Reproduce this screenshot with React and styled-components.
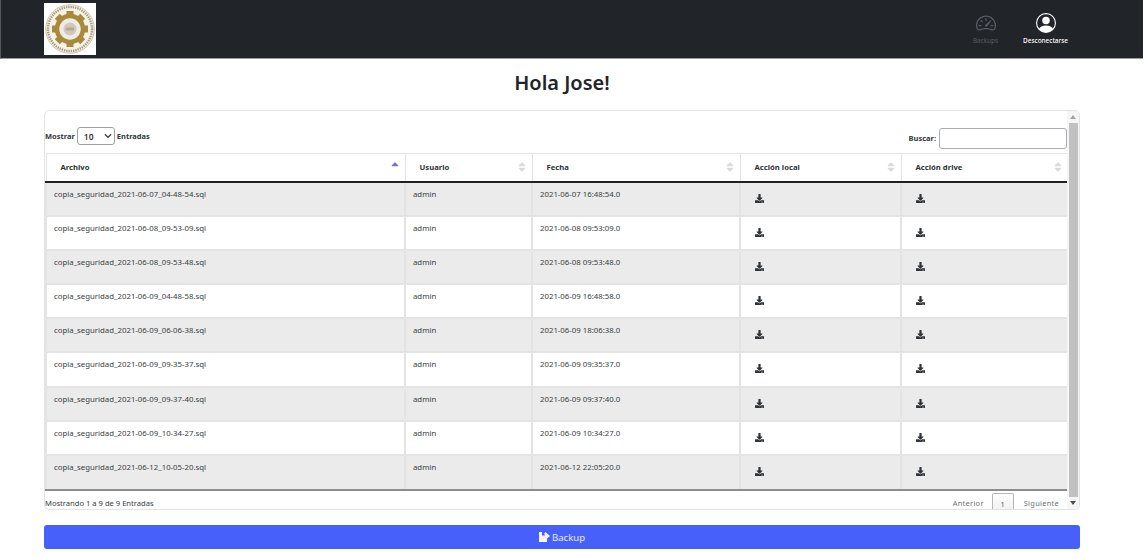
import React from "react";
import styled, { createGlobalStyle } from "styled-components";
import { FaDownload, FaSort, FaSortUp, FaChevronDown } from "react-icons/fa";
import { BsSpeedometer2, BsPersonCircle } from "react-icons/bs";

const GlobalStyle = createGlobalStyle`
  html, body { margin: 0; padding: 0; background: #fff; }
  body { font-family: "Noto Sans", "Open Sans", sans-serif; color: #212529; }
  * { box-sizing: border-box; }
`;

const rows = [
  ["copia_seguridad_2021-06-07_04-48-54.sql", "2021-06-07 16:48:54.0"],
  ["copia_seguridad_2021-06-08_09-53-09.sql", "2021-06-08 09:53:09.0"],
  ["copia_seguridad_2021-06-08_09-53-48.sql", "2021-06-08 09:53:48.0"],
  ["copia_seguridad_2021-06-09_04-48-58.sql", "2021-06-09 16:48:58.0"],
  ["copia_seguridad_2021-06-09_06-06-38.sql", "2021-06-09 18:06:38.0"],
  ["copia_seguridad_2021-06-09_09-35-37.sql", "2021-06-09 09:35:37.0"],
  ["copia_seguridad_2021-06-09_09-37-40.sql", "2021-06-09 09:37:40.0"],
  ["copia_seguridad_2021-06-09_10-34-27.sql", "2021-06-09 10:34:27.0"],
  ["copia_seguridad_2021-06-12_10-05-20.sql", "2021-06-12 22:05:20.0"],
];

const columns = [
  { title: "Archivo", width: 359, active: true },
  { title: "Usuario", width: 127 },
  { title: "Fecha", width: 208 },
  { title: "Acción local", width: 161 },
  { title: "Acción drive", width: 167 },
];

const Page = styled.div`
  width: 1146px;
  height: 559px;
  overflow: hidden;
`;

const Navbar = styled.nav`
  width: 1143px;
  height: 59px;
  background: #212529;
  border-left: 1px solid #55595e;
  border-bottom: 1px solid #9a9c9f;
  padding: 3px 75px 0 43px;
  display: flex;
  justify-content: space-between;
`;

const Logo = styled.div`
  width: 52px;
  height: 52px;
  background: #fff;
  display: flex;
  align-items: center;
  justify-content: center;
  svg {
    filter: blur(0.4px);
  }
`;

const NavLinks = styled.div`
  display: flex;
  gap: 25px;
  padding-top: 10px;
`;

const NavLink = styled.a`
  display: flex;
  flex-direction: column;
  align-items: center;
  gap: 3px;
  font-size: 6.4px;
  line-height: 10px;
  color: ${(p) => (p.$muted ? "#565d67" : "#fff")};
  font-weight: ${(p) => (p.$muted ? 400 : 500)};
`;

const Title = styled.h1`
  margin: 10px 0 14px;
  height: 27px;
  font-size: 20px;
  line-height: 27px;
  font-weight: 600;
  text-align: center;
  width: 1124px;
`;

const Card = styled.section`
  margin-left: 44px;
  width: 1036px;
  height: 400px;
  border: 1px solid #e2e3e5;
  border-radius: 5px;
  display: flex;
  overflow: hidden;
`;

const Content = styled.div`
  width: 1022px;
  flex: none;
`;

const Controls = styled.div`
  height: 42px;
  padding-top: 17px;
  display: flex;
  justify-content: space-between;
  font-size: 7.5px;
  font-weight: 700;
  color: #33373b;
`;

const Label = styled.label`
  display: flex;
  align-items: center;
  gap: 2px;
  height: 20px;
`;

const EntriesLabel = styled(Label)`
  margin-top: -2px;
`;

const SelectBox = styled.span`
  width: 38px;
  height: 18px;
  border: 1px solid #9ea2a6;
  border-radius: 3px;
  display: flex;
  align-items: center;
  justify-content: space-between;
  padding: 0 2px 0 6px;
  font-size: 8.5px;
  font-weight: 600;
  color: #33373b;
`;

const SearchBox = styled.span`
  width: 128px;
  height: 21px;
  border: 1px solid #a9adb1;
  border-radius: 3px;
  margin-left: 1px;
`;

const Table = styled.table`
  width: 1022px;
  table-layout: fixed;
  border-collapse: collapse;
`;

const HeadCell = styled.th`
  height: 28px;
  position: relative;
  padding: 0 0 1px 14px;
  text-align: left;
  font-size: 7.7px;
  font-weight: 700;
  color: #2f3337;
  border-top: 1px solid #e4e4e8;
  border-left: 1px solid #e4e4e8;
  border-right: 1px solid #e4e4e8;
  border-bottom: 2px solid #1f2225;
`;

const SortMark = styled.span`
  position: absolute;
  right: 4px;
  top: 7px;
  font-size: 12px;
  line-height: 13px;
  color: ${(p) => (p.$active ? "#7b74d0" : "#d8dadc")};
`;

const Row = styled.tr`
  background: ${(p) => (p.$striped ? "#ebebeb" : "#fff")};
`;

const Cell = styled.td`
  height: 34.2px;
  padding: 6px 8px 0 7px;
  vertical-align: top;
  font-size: 7.8px;
  line-height: 11px;
  color: #3a3e42;
  border: 2px solid #e4e4e4;
  border-top: 0;
  tr:last-child & {
    height: 35px;
    border-bottom: 2px solid #8d8d8d;
  }
`;

const IconCell = styled(Cell)`
  padding: 11px 0 0 14px;
  color: #2f3337;
  font-size: 9px;
`;

const Footer = styled.div`
  height: 20px;
  display: flex;
  justify-content: space-between;
  font-size: 7.6px;
  color: #3a3e42;
  padding-top: 7px;
`;

const Pager = styled.div`
  display: flex;
  margin-top: -5px;
  font-size: 7.4px;
  color: #6d7175;
`;

const PagerLink = styled.span`
  padding: 5px 8px 0 10px;
  letter-spacing: 0.3px;
`;

const PagerCurrent = styled.span`
  width: 22px;
  height: 20px;
  border: 1px solid #b4b6b8;
  border-bottom: 0;
  border-radius: 2px 2px 0 0;
  background: linear-gradient(#fff, #eee);
  text-align: center;
  padding-top: 5px;
  color: #555;
`;

const Scrollbar = styled.div`
  width: 12px;
  background: #f6f6f6;
  display: flex;
  flex-direction: column;
  align-items: center;
`;

const Arrow = styled.span`
  width: 0;
  height: 0;
  margin: 4px 0;
  border-left: 3px solid transparent;
  border-right: 3px solid transparent;
  border-${(p) => (p.$up ? "bottom" : "top")}: 4px solid ${(p) => (p.$up ? "#a4a4a4" : "#505050")};
`;

const Thumb = styled.div`
  width: 9px;
  flex: 1;
  background: #c1c1c1;
`;

const BackupButton = styled.button`
  display: flex;
  align-items: center;
  justify-content: center;
  gap: 2px;
  margin: 15px 0 0 44px;
  width: 1036px;
  height: 24px;
  border: 0;
  border-radius: 3px;
  background: #4760fb;
  color: #e8ebff;
  font-family: inherit;
  font-size: 9.6px;
`;

// sello de la escuela, la imagen original no esta disponible
const Seal = () => {
  const teeth = [0, 45, 90, 135, 180, 225, 270, 315];
  return (
    <svg width="50" height="50" viewBox="0 0 50 50">
      <circle cx="25" cy="25" r="24.3" fill="#f5f2ea" stroke="#c4b68c" strokeWidth="0.8" />
      <circle cx="25" cy="25" r="22" fill="none" stroke="#a79c80" strokeWidth="2.4" strokeDasharray="1.4 0.9" />
      {teeth.map((a) => (
        <rect key={a} x="21.5" y="7" width="7" height="7" fill="#a88a3a" transform={`rotate(${a} 25 25)`} />
      ))}
      <circle cx="25" cy="25" r="13" fill="#efece6" stroke="#a88a3a" strokeWidth="4.5" />
      <circle cx="25" cy="25" r="6.5" fill="#cfc9c2" />
      <rect x="21" y="23.5" width="8" height="3" fill="#b7a98e" />
    </svg>
  );
};

const BackupIcon = () => (
  <svg width="11" height="10" viewBox="0 0 11 10" fill="#f4f6ff">
    <path d="M0 0h3v3.5h3.5L5 2l1.5-2L11 4 7.5 7H8v3H0z" />
  </svg>
);

export default function App() {
  return (
    <Page>
      <GlobalStyle />
      <Navbar>
        <Logo>
          <Seal />
        </Logo>
        <NavLinks>
          <NavLink $muted>
            <BsSpeedometer2 size={20} />
            Backups
          </NavLink>
          <NavLink>
            <BsPersonCircle size={20} />
            Desconectarse
          </NavLink>
        </NavLinks>
      </Navbar>
      <Title>Hola Jose!</Title>
      <Card>
        <Content>
          <Controls>
            <EntriesLabel>
              Mostrar
              <SelectBox>
                10
                <FaChevronDown size={8} />
              </SelectBox>
              Entradas
            </EntriesLabel>
            <Label>
              Buscar:
              <SearchBox />
            </Label>
          </Controls>
          <Table>
            <colgroup>
              {columns.map((c) => (
                <col key={c.title} width={c.width} />
              ))}
            </colgroup>
            <thead>
              <tr>
                {columns.map((c) => (
                  <HeadCell key={c.title}>
                    {c.title}
                    <SortMark $active={c.active}>{c.active ? <FaSortUp /> : <FaSort />}</SortMark>
                  </HeadCell>
                ))}
              </tr>
            </thead>
            <tbody>
              {rows.map(([file, date], i) => (
                <Row key={file} $striped={i % 2 === 0}>
                  <Cell>{file}</Cell>
                  <Cell>admin</Cell>
                  <Cell>{date}</Cell>
                  <IconCell>
                    <FaDownload />
                  </IconCell>
                  <IconCell>
                    <FaDownload />
                  </IconCell>
                </Row>
              ))}
            </tbody>
          </Table>
          <Footer>
            <span>Mostrando 1 a 9 de 9 Entradas</span>
            <Pager>
              <PagerLink>Anterior</PagerLink>
              <PagerCurrent>1</PagerCurrent>
              <PagerLink>Siguiente</PagerLink>
            </Pager>
          </Footer>
        </Content>
        <Scrollbar>
          <Arrow $up />
          <Thumb />
          <Arrow />
        </Scrollbar>
      </Card>
      <BackupButton>
        <BackupIcon />
        Backup
      </BackupButton>
    </Page>
  );
}
